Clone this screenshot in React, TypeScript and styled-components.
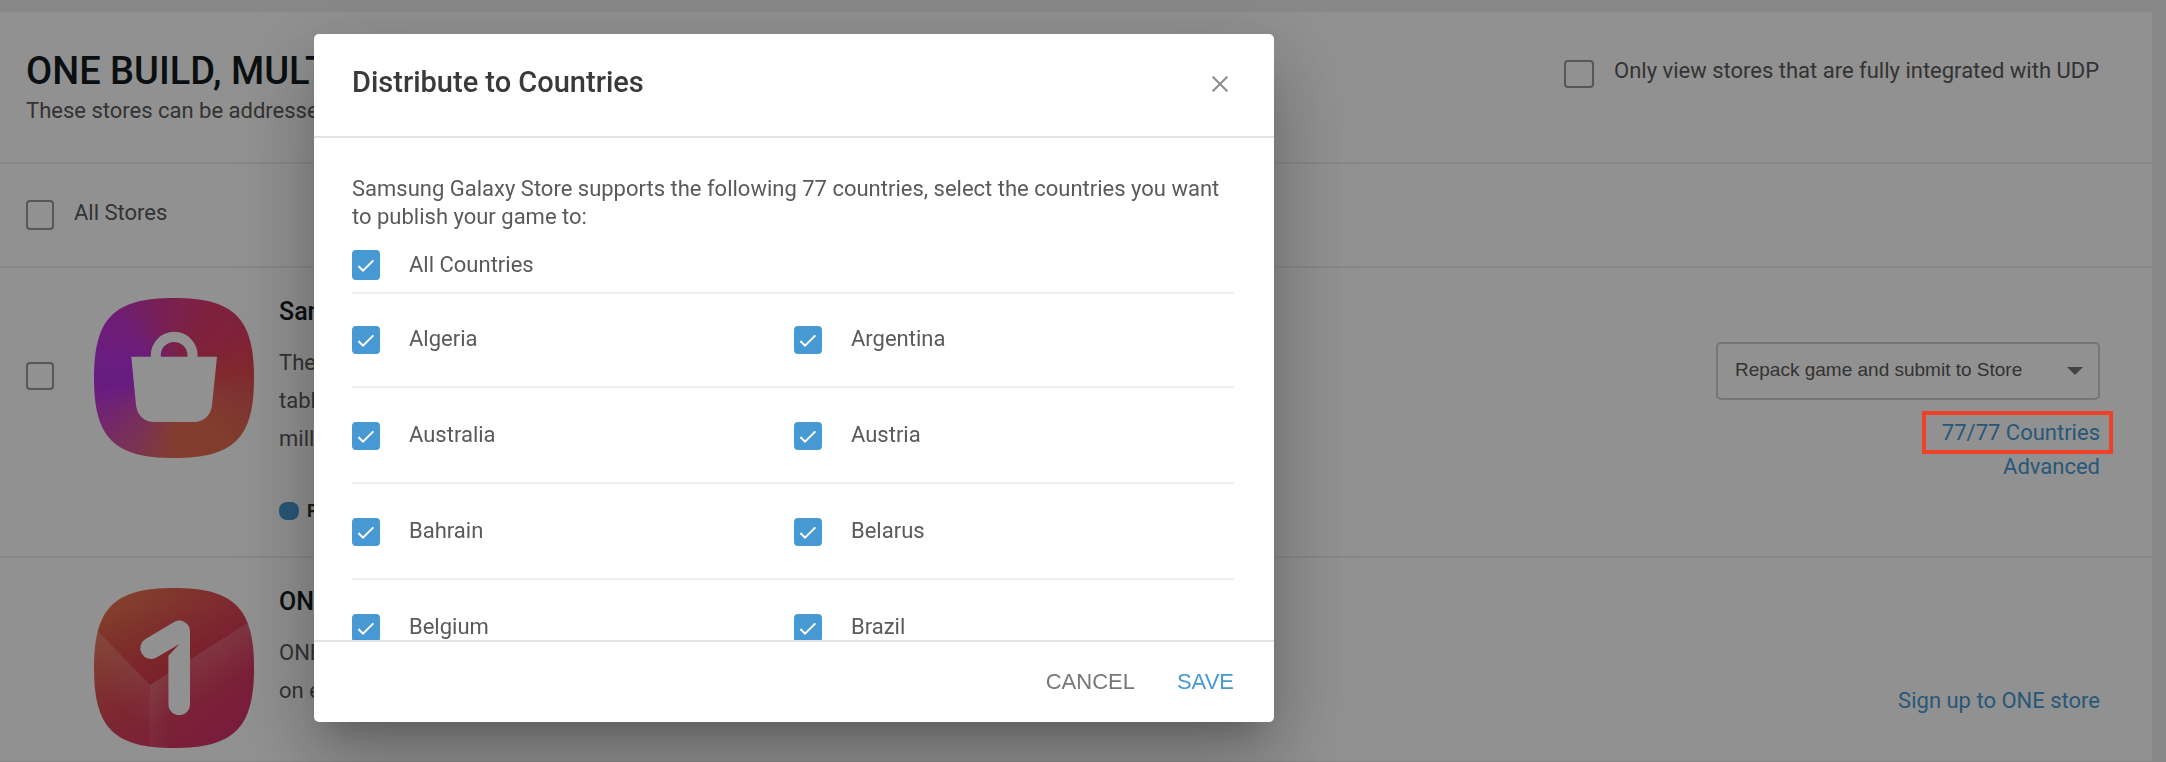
import React, { useState } from "react";
import styled, { createGlobalStyle } from "styled-components";

const GlobalStyle = createGlobalStyle`
  * { box-sizing: border-box; }
  body {
    margin: 0;
    overflow: hidden;
    background: #f0f0f0;
    color: #5a5a5a;
    font-family: Roboto, "Liberation Sans", sans-serif;
    font-size: 22px;
    line-height: 28px;
  }
  h1, h2, h3, p { margin: 0; }
`;

/* ---------- page ---------- */

const Panel = styled.main`
  margin: 12px 14px 0 0;
  background: #ffffff;
`;

const PageHeader = styled.header`
  display: flex;
  justify-content: space-between;
  align-items: flex-start;
  height: 152px;
  padding: 37px 48px 0 26px;
  border-bottom: 2px solid #efefef;
`;

const PageTitle = styled.h1`
  margin-bottom: 4px;
  color: #121b1e;
  font-size: 38px;
  font-weight: 500;
  line-height: 44px;
`;

const FilterArea = styled.div`
  min-width: 540px;
  padding-top: 8px;
`;

const AllStoresRow = styled.div`
  height: 104px;
  padding: 35px 26px 0;
  border-bottom: 2px solid #efefef;
`;

const StoreRow = styled.section<{ $bottom: number }>`
  display: grid;
  grid-template-columns: 28px 160px 1fr 384px;
  align-items: start;
  padding: 30px 52px ${(p) => p.$bottom}px 26px;
  border-bottom: 2px solid #efefef;
`;

const PickCell = styled.div`
  padding-top: 64px;
`;

const LogoCell = styled.div`
  width: 160px;
  height: 160px;
  margin-left: 40px;
`;

const StoreInfo = styled.div`
  padding-left: 65px;
`;

const StoreName = styled.h3`
  margin-bottom: 18px;
  color: #121b1e;
  font-size: 25px;
  font-weight: 500;
  line-height: 28px;
`;

const StoreText = styled.p`
  line-height: 38px;
`;

const StatusLine = styled.div`
  display: flex;
  align-items: center;
  gap: 8px;
  margin-top: 44px;
  color: #333333;
  font-size: 18px;
  font-weight: 700;
  line-height: 18px;
`;

const StatusDot = styled.span`
  width: 20px;
  height: 18px;
  border-radius: 8px;
  background: #4799d3;
`;

const Actions = styled.div<{ $top: number }>`
  display: flex;
  flex-direction: column;
  align-items: flex-end;
  padding-top: ${(p) => p.$top}px;
`;

const SelectBox = styled.div`
  display: grid;
  align-items: center;
  width: 100%;
  margin-bottom: 16px;
  > * { grid-area: 1 / 1; }
  > svg { justify-self: end; margin-right: 17px; pointer-events: none; }
`;

const Select = styled.select`
  appearance: none;
  width: 100%;
  height: 58px;
  padding: 0 48px 4px 17px;
  border: 2px solid #cfcfcf;
  border-radius: 5px;
  background: transparent;
  color: #5a5a5a;
  font: 19px "Liberation Sans", Arial, sans-serif;
`;

const TextLink = styled.a`
  position: relative;
  color: #4799d3;
  line-height: 34px;
  text-decoration: none;
`;

const Marker = styled.span`
  position: absolute;
  inset: -5px -13px -4px -20px;
  z-index: 20;
  border: 4px solid #ee4128;
  pointer-events: none;
`;

/* ---------- checkbox ---------- */

const CheckLabel = styled.label<{ $gap: number }>`
  display: flex;
  align-items: flex-start;
  gap: ${(p) => p.$gap}px;
  cursor: pointer;
`;

const CheckFace = styled.span<{ $drop: number }>`
  display: grid;
  flex: none;
  margin-top: ${(p) => p.$drop}px;
  > * { grid-area: 1 / 1; place-self: center; }
  > svg { pointer-events: none; }
`;

const CheckInput = styled.input<{ $w: number; $h: number }>`
  appearance: none;
  width: ${(p) => p.$w}px;
  height: ${(p) => p.$h}px;
  margin: 0;
  border: 2px solid #9a9a9a;
  border-radius: 4px;
  &:checked {
    border-color: #4799d3;
    background: #4799d3;
  }
`;

type CheckProps = {
  label?: string;
  name?: string;
  initial?: boolean;
  gap?: number;
  drop?: number;
  w?: number;
  h?: number;
};

function Check({ label, name, initial = false, gap = 29, drop = 0, w = 28, h = 28 }: CheckProps) {
  const [on, setOn] = useState(initial);
  return (
    <CheckLabel $gap={gap}>
      <CheckFace $drop={drop}>
        <CheckInput
          type="checkbox"
          $w={w}
          $h={h}
          aria-label={name}
          checked={on}
          onChange={(e) => setOn(e.target.checked)}
        />
        {on && (
          <svg width="28" height="28" viewBox="0 0 28 28" aria-hidden="true">
            <path d="M6.4 15L11 19.6L21.4 9.4" fill="none" stroke="#fff" strokeWidth="2" />
          </svg>
        )}
      </CheckFace>
      {label}
    </CheckLabel>
  );
}

/* ---------- dialog ---------- */

const Backdrop = styled.div`
  position: fixed;
  inset: 0;
  z-index: 10;
  padding: 34px 40px 40px 314px;
  background: rgba(0, 0, 0, 0.43);
`;

const Dialog = styled.section`
  display: flex;
  flex-direction: column;
  width: 100%;
  max-width: 960px;
  max-height: calc(100vh - 74px);
  border-radius: 5px;
  background: #ffffff;
  box-shadow:
    0 22px 30px -14px rgba(0, 0, 0, 0.2),
    0 48px 76px 6px rgba(0, 0, 0, 0.14),
    0 18px 92px 16px rgba(0, 0, 0, 0.12);
`;

const DialogHeader = styled.header`
  display: flex;
  flex: none;
  justify-content: space-between;
  align-items: flex-start;
  height: 104px;
  padding: 30px 34px 0 38px;
  border-bottom: 2px solid #e3e3e3;
`;

const DialogTitle = styled.h2`
  color: #3a3a3a;
  font-size: 29px;
  font-weight: 500;
  line-height: 36px;
`;

const CloseButton = styled.button`
  display: grid;
  place-items: center;
  width: 40px;
  height: 40px;
  padding: 0;
  border: 0;
  background: none;
`;

const DialogBody = styled.div`
  flex: 1;
  min-height: 0;
  overflow-y: auto;
  scrollbar-width: none;
  padding: 37px 40px 0 38px;
`;

const Intro = styled.p`
  margin-bottom: 20px;
`;

const CountryList = styled.div`
  margin-top: 12px;
`;

const CountryRow = styled.div`
  display: grid;
  grid-template-columns: 1fr 1fr;
  column-gap: 2px;
  height: 96px;
  padding-top: 33px;
  border-bottom: 2px solid #efefef;
  &:first-child {
    padding-top: 31px;
    border-top: 2px solid #efefef;
  }
`;

const DialogFooter = styled.footer`
  display: flex;
  flex: none;
  justify-content: flex-end;
  align-items: center;
  gap: 42px;
  height: 82px;
  padding-right: 40px;
  border-top: 2px solid #e3e3e3;
`;

const FooterButton = styled.button<{ $primary?: boolean }>`
  padding: 0;
  border: 0;
  background: none;
  color: ${(p) => (p.$primary ? "#4799d3" : "#777777")};
  font: 22px/28px "Liberation Sans", Arial, sans-serif;
`;

/* ---------- logos ---------- */

const SQUIRCLE = "M80 0C140 0 160 20 160 80C160 140 140 160 80 160C20 160 0 140 0 80C0 20 20 0 80 0Z";

const GalaxyTile = styled.div`
  width: 160px;
  height: 160px;
  clip-path: path("${SQUIRCLE}");
  background: conic-gradient(
    #d63a88 0deg, #de3a70 25deg, #e03c64 55deg, #e4484f 85deg, #e05a5a 105deg,
    #e46a4f 135deg, #e66c54 180deg, #d4569a 215deg, #d04cac 228deg,
    #b832e4 262deg, #b932e4 285deg, #c234cc 318deg, #d0389c 345deg, #d63a88 360deg
  );
`;

function GalaxyLogo() {
  return (
    <GalaxyTile>
      <svg width="160" height="160" viewBox="0 0 160 160" aria-label="Galaxy Store" role="img">
        <path
          fill="#fff"
          fillRule="evenodd"
          d="M37.3 58.7H56.8V57.2A23.4 23.4 0 0 1 103.6 57.2V58.7H123L118 107C117 117 110 124 100 124H60C50 124 43 117 42 107ZM66.8 58.7H93.4V57.2A13.3 13.3 0 0 0 66.8 57.2Z"
        />
      </svg>
    </GalaxyTile>
  );
}

function OneLogo() {
  return (
    <svg width="160" height="160" viewBox="0 0 160 160" aria-label="ONE store" role="img">
      <defs>
        <linearGradient id="oneBase" x1="0.1" y1="0.05" x2="0.9" y2="0.95">
          <stop offset="0" stopColor="#e8744c" />
          <stop offset="0.5" stopColor="#dc4456" />
          <stop offset="1" stopColor="#d4306e" />
        </linearGradient>
        <linearGradient id="oneLeft" gradientUnits="userSpaceOnUse" x1="34" y1="76" x2="8" y2="106">
          <stop offset="0" stopColor="#fff" stopOpacity="0.12" />
          <stop offset="1" stopColor="#fff" stopOpacity="0" />
        </linearGradient>
        <linearGradient id="oneRight" gradientUnits="userSpaceOnUse" x1="84" y1="80" x2="104" y2="114">
          <stop offset="0" stopColor="#fff" stopOpacity="0.14" />
          <stop offset="1" stopColor="#fff" stopOpacity="0" />
        </linearGradient>
        <linearGradient id="oneTop" gradientUnits="userSpaceOnUse" x1="80" y1="20" x2="80" y2="97">
          <stop offset="0" stopColor="#c02030" stopOpacity="0" />
          <stop offset="1" stopColor="#d02838" stopOpacity="0.4" />
        </linearGradient>
        <linearGradient id="oneSeam" gradientUnits="userSpaceOnUse" x1="56" y1="0" x2="76" y2="0">
          <stop offset="0" stopColor="#fff" stopOpacity="0.08" />
          <stop offset="1" stopColor="#fff" stopOpacity="0" />
        </linearGradient>
        <clipPath id="oneClip">
          <path d={SQUIRCLE} />
        </clipPath>
      </defs>
      <g clipPath="url(#oneClip)">
        <rect width="160" height="160" fill="url(#oneBase)" />
        <path d="M0 39L56 97L160 31V0H0Z" fill="url(#oneTop)" />
        <path d="M0 39L56 97V160H0Z" fill="url(#oneLeft)" />
        <path d="M56 97L160 31V160H56Z" fill="url(#oneRight)" />
        <path d="M56 97L76 84V160H56Z" fill="url(#oneSeam)" />
        <path
          fill="#fff"
          d="M96 43.5V116.3A10.8 10.8 0 0 1 74.4 116.3V67.8L85.6 56L62 69.8A10.8 10.8 0 0 1 51.4 51L79.4 34.4A10.8 10.8 0 0 1 96 43.5Z"
        />
      </g>
    </svg>
  );
}

/* ---------- app ---------- */

const COUNTRIES: [string, string][] = [
  ["Algeria", "Argentina"],
  ["Australia", "Austria"],
  ["Bahrain", "Belarus"],
  ["Belgium", "Brazil"],
];

export default function App() {
  return (
    <>
      <GlobalStyle />
      <Panel>
        <PageHeader>
          <div>
            <PageTitle>ONE BUILD, MULTI</PageTitle>
            <p>These stores can be addressed</p>
          </div>
          <FilterArea>
            <Check label="Only view stores that are fully integrated with UDP" gap={20} drop={3} w={30} />
          </FilterArea>
        </PageHeader>

        <AllStoresRow>
          <Check label="All Stores" gap={20} drop={1} h={30} />
        </AllStoresRow>

        <StoreRow $bottom={36}>
          <PickCell>
            <Check name="Samsung Galaxy Store" />
          </PickCell>
          <LogoCell>
            <GalaxyLogo />
          </LogoCell>
          <StoreInfo>
            <StoreName>Samsung</StoreName>
            <StoreText>
              The
              <br />
              tablet
              <br />
              million
            </StoreText>
            <StatusLine>
              <StatusDot />
              Published
            </StatusLine>
          </StoreInfo>
          <Actions $top={44}>
            <SelectBox>
              <Select aria-label="Submission mode">
                <option>Repack game and submit to Store</option>
              </Select>
              <svg width="16" height="8" viewBox="0 0 16 8" aria-hidden="true">
                <path d="M0 0H16L8 8Z" fill="#777" />
              </svg>
            </SelectBox>
            <TextLink href="#countries">
              77/77 Countries
              <Marker />
            </TextLink>
            <TextLink href="#advanced">Advanced</TextLink>
          </Actions>
        </StoreRow>

        <StoreRow $bottom={13}>
          <div />
          <LogoCell>
            <OneLogo />
          </LogoCell>
          <StoreInfo>
            <StoreName>ONE</StoreName>
            <StoreText>
              ONE
              <br />
              on every
            </StoreText>
          </StoreInfo>
          <Actions $top={96}>
            <TextLink href="#signup">Sign up to ONE store</TextLink>
          </Actions>
        </StoreRow>
      </Panel>

      <Backdrop>
        <Dialog role="dialog" aria-modal="true" aria-labelledby="dialog-title">
          <DialogHeader>
            <DialogTitle id="dialog-title">Distribute to Countries</DialogTitle>
            <CloseButton type="button" aria-label="Close">
              <svg width="16" height="16" viewBox="0 0 16 16" aria-hidden="true">
                <path d="M0.6 0.6L15.4 15.4M15.4 0.6L0.6 15.4" stroke="#8c8c8c" strokeWidth="2" />
              </svg>
            </CloseButton>
          </DialogHeader>
          <DialogBody>
            <Intro>
              Samsung Galaxy Store supports the following 77 countries, select the countries you want to
              publish your game to:
            </Intro>
            <Check label="All Countries" initial drop={-1} h={30} />
            <CountryList>
              {COUNTRIES.map(([left, right]) => (
                <CountryRow key={left}>
                  <Check label={left} initial drop={1} />
                  <Check label={right} initial drop={1} />
                </CountryRow>
              ))}
            </CountryList>
          </DialogBody>
          <DialogFooter>
            <FooterButton type="button">CANCEL</FooterButton>
            <FooterButton type="button" $primary>
              SAVE
            </FooterButton>
          </DialogFooter>
        </Dialog>
      </Backdrop>
    </>
  );
}
